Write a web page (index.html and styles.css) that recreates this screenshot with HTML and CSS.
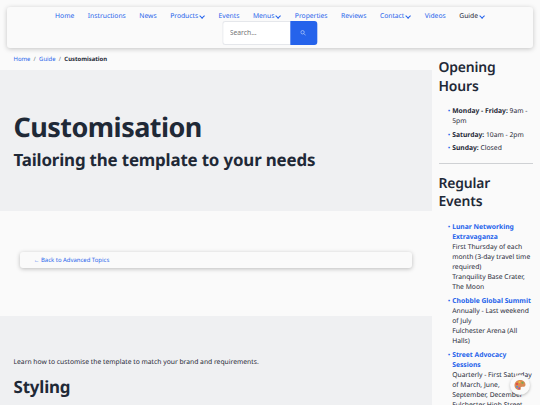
FILE: index.html
```html
<!DOCTYPE html>
<html lang="en">
<head>
    <meta charset="UTF-8">
    <meta name="viewport" content="width=device-width, initial-scale=1.0">
    <title>Customisation</title>
    <link rel="stylesheet" href="styles.css">
</head>
<body>
    <header class="site-header">
        <nav>
            <ul class="menu">
                <li><a href="#">Home</a></li>
                <li><a href="#">Instructions</a></li>
                <li><a href="#">News</a></li>
                <li class="has-children"><a href="#">Products</a></li>
                <li><a href="#">Events</a></li>
                <li class="has-children"><a href="#">Menus</a></li>
                <li><a href="#">Properties</a></li>
                <li><a href="#">Reviews</a></li>
                <li class="has-children"><a href="#">Contact</a></li>
                <li><a href="#">Videos</a></li>
                <li class="has-children"><a href="#" class="active">Guide</a></li>
            </ul>
        </nav>
        <form class="search" action="#">
            <input type="text" placeholder="Search..." aria-label="Search">
            <button type="submit" aria-label="Submit search">
                <svg viewBox="0 0 16 16">
                    <circle cx="6" cy="6" r="4.6" />
                    <path d="M9.5 9.5L14.5 14.5" />
                </svg>
            </button>
        </form>
    </header>

    <div class="layout">
        <main>
            <div class="breadcrumbs">
                <a href="#">Home</a><span>/</span><a href="#">Guide</a><span>/</span><strong>Customisation</strong>
            </div>
            <section class="hero">
                <h1>Customisation</h1>
                <h2>Tailoring the template to your needs</h2>
            </section>
            <section class="back">
                <a class="back-link" href="#">← Back to Advanced Topics</a>
            </section>
            <section class="content">
                <p>Learn how to customise the template to match your brand and requirements.</p>
                <h2>Styling</h2>
            </section>
        </main>

        <aside>
            <h3>Opening Hours</h3>
            <ul class="hours">
                <li><strong>Monday - Friday:</strong> 9am - 5pm</li>
                <li><strong>Saturday:</strong> 10am - 2pm</li>
                <li><strong>Sunday:</strong> Closed</li>
            </ul>
            <hr>
            <h3>Regular Events</h3>
            <ul class="events">
                <li><a href="#">Lunar Networking Extravaganza</a><br>First Thursday of each month (3-day travel time required)<br>Tranquility Base Crater, The Moon</li>
                <li><a href="#">Chobble Global Summit</a><br>Annually - Last weekend of July<br>Fulchester Arena (All Halls)</li>
                <li><a href="#">Street Advocacy Sessions</a><br>Quarterly - First Saturday of March, June, September, December<br>Fulchester High Street</li>
            </ul>
        </aside>
    </div>

    <button class="theme-button" aria-label="Change theme">
        <svg viewBox="0 0 24 24">
            <path fill="#d98a55" d="M12 2C6 2 1 6.500 1 12.500c0 5.500 4.500 9.500 10 9.500 2.500 0 3-1.500 2.500-3-.6-2 .5-3.500 2.500-3.500 3 0 7 .5 7-4C23 6 18 2 12 2z" />
            <circle cx="6" cy="10" r="2.200" fill="#e8473b" />
            <circle cx="11" cy="6" r="2.200" fill="#f7c531" />
            <circle cx="17" cy="7.500" r="2.200" fill="#6fae50" />
            <circle cx="6" cy="15.500" r="2.200" fill="#5a8fd0" />
            <circle cx="10.500" cy="18.500" r="1.800" fill="#9c4fc4" />
        </svg>
    </button>
</body>
</html>
```
FILE: styles.css
```css
* {
    box-sizing: border-box;
}

body {
    margin: 0;
    height: 405px;
    overflow: hidden;
    background-color: #fafafa;
    color: #1f2937;
    font-family: "Noto Sans", sans-serif;
    font-size: 6.75px;
    line-height: 10.1px;
    text-rendering: geometricPrecision;
}

a {
    color: #2563eb;
    text-decoration: none;
}

ul {
    list-style: none;
    margin: 0;
    padding: 0;
}

h1,
h2,
h3,
p {
    margin: 0;
}

h2,
h3 {
    letter-spacing: -0.01em;
}

.site-header {
    height: 41px;
    margin: 7px 7px 0;
    padding-top: 4px;
    border-radius: 3px;
    background-color: #fafafa;
    box-shadow: 0 1px 5px rgba(0, 0, 0, 0.22);
}

.menu {
    display: flex;
    justify-content: center;
    gap: 13.5px;
    line-height: 9.6px;
}

.has-children::after {
    content: "";
    display: inline-block;
    width: 3.2px;
    height: 3.2px;
    margin: 0 1px 0 1.7px;
    border-right: 1.2px solid #2563eb;
    border-bottom: 1.2px solid #2563eb;
    transform: rotate(45deg);
}

.menu .active {
    color: #1f2937;
}

.search {
    display: flex;
    width: 95px;
    height: 24px;
    margin: 0 auto;
    transform: translateX(-0.7px);
}

.search input {
    width: 68px;
    padding: 0 7px;
    border: 1px solid #e5e7eb;
    border-right: none;
    border-radius: 3px 0 0 3px;
    background-color: #fff;
    font: inherit;
}

.search input::placeholder {
    color: #757575;
}

.search button {
    display: flex;
    align-items: center;
    justify-content: center;
    width: 27px;
    padding: 0;
    border: none;
    border-radius: 0 3px 3px 0;
    background-color: #2563eb;
}

.search svg {
    width: 6px;
    height: 6px;
    fill: none;
    stroke: #b5cbf8;
    stroke-width: 2;
}

.layout {
    display: flex;
}

main {
    width: 432px;
}

.breadcrumbs {
    height: 22px;
    padding: 6px 13.5px 0;
    font-size: 5.92px;
}

.breadcrumbs span {
    margin: 0 3.3px;
    color: #6b7280;
}

.hero {
    height: 141px;
    padding: 39px 13.5px 0;
    background-color: #eff0f2;
}

.hero h1 {
    font-size: 27px;
    line-height: 36px;
    letter-spacing: -0.02em;
}

.hero h2 {
    margin-top: 4.4px;
    font-size: 16.9px;
    line-height: 22px;
}

.back {
    height: 105px;
    padding: 41px 20px 0;
}

.back-link {
    display: block;
    height: 16px;
    padding: 3px 13.5px;
    border-radius: 3px;
    box-shadow: 0 1px 4px rgba(0, 0, 0, 0.25);
    font-size: 5.95px;
}

.content {
    height: 100px;
    padding: 40.5px 13.5px 0;
    background-color: #eff0f2;
}

.content h2 {
    margin-top: 9.4px;
    font-size: 16.9px;
    line-height: 22px;
}

aside {
    width: 94.5px;
    margin-left: 6.5px;
    padding-top: 11.4px;
}

aside h3 {
    font-size: 13.9px;
    font-weight: 600;
    line-height: 18.5px;
}

aside ul {
    margin-top: 9.6px;
    padding-left: 13.7px;
}

aside li {
    position: relative;
    margin-bottom: 3.4px;
}

aside li::before {
    content: "•";
    position: absolute;
    left: -4.5px;
    color: #2563eb;
    font-size: 6.75px;
}

.events a {
    font-weight: 700;
}

aside hr {
    height: 1px;
    margin: 9.5px 0 11.2px;
    border: none;
    background-color: #cfd1d4;
}

aside .events {
    margin-top: 10px;
}

.theme-button {
    position: fixed;
    right: 10.5px;
    bottom: 10.5px;
    display: flex;
    align-items: center;
    justify-content: center;
    width: 20px;
    height: 20px;
    padding: 0;
    border: none;
    border-radius: 50%;
    background-color: #fafafa;
    box-shadow: 0 1px 3px rgba(0, 0, 0, 0.25);
}

.theme-button svg {
    width: 12px;
    height: 12px;
}
```
